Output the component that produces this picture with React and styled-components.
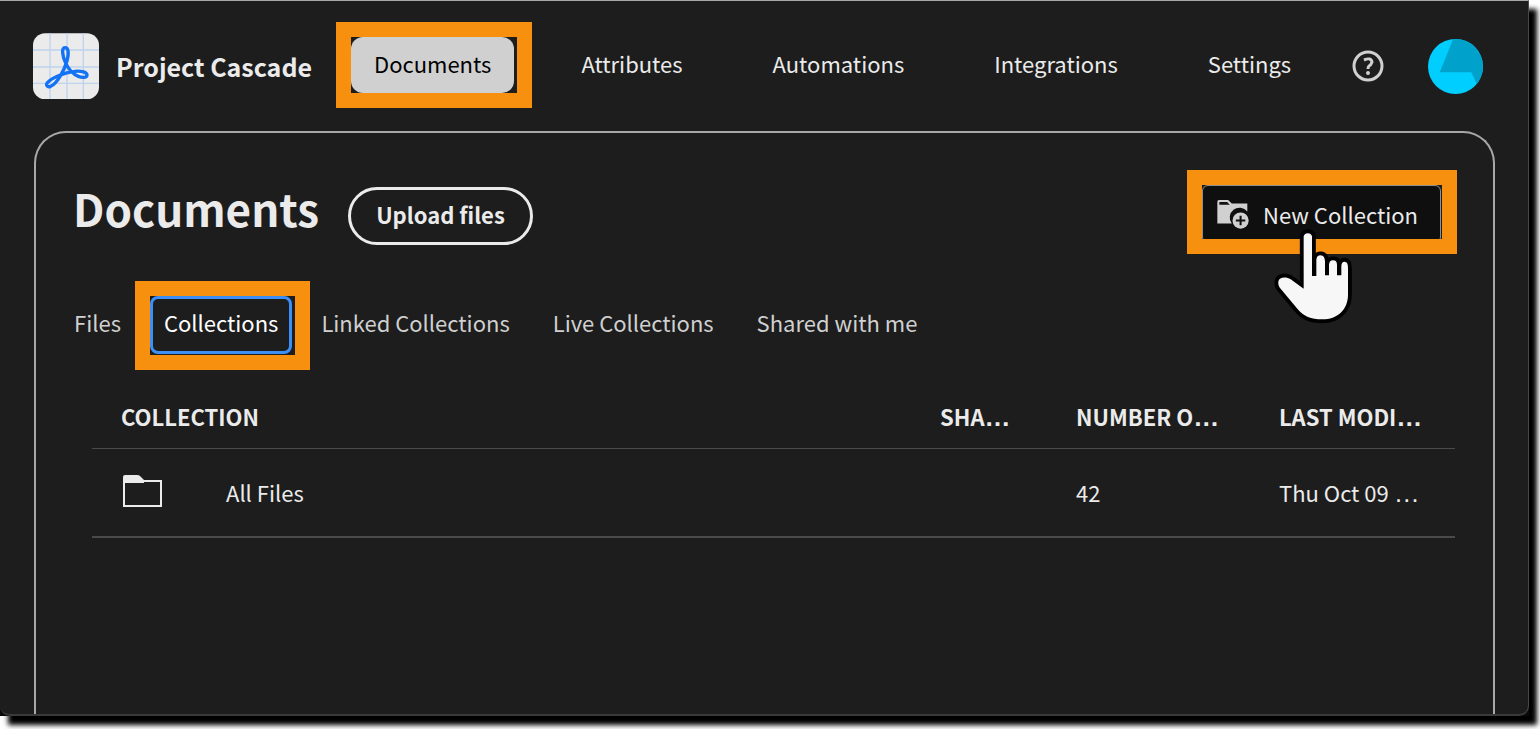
import React from "react";
import styled, { createGlobalStyle } from "styled-components";

const GlobalStyle = createGlobalStyle`
  *, *::before, *::after { box-sizing: border-box; }
  body {
    margin: 0;
    background: #fff;
    color: #ebebeb;
    font-family: "Noto Sans CJK JP", "Noto Sans", sans-serif;
    font-size: 22px;
    line-height: 32px;
  }
  button { font: inherit; color: inherit; cursor: pointer; }
  a { color: inherit; text-decoration: none; }
`;

const Page = styled.div`
  display: flex;
  min-height: 100vh;
  padding: 0 11px 13px 0;
  overflow: hidden;
`;

const Backdrop = styled.div`
  display: flex;
  flex: 1;
  min-width: 0;
  background: #0a0a0a;
  box-shadow: 8px 9px 5px #000;
`;

const AppWindow = styled.div`
  display: flex;
  flex: 1;
  flex-direction: column;
  min-width: 0;
  background: #1d1d1d;
  border-top: 1px solid #a5aaa8;
  border-right: 1px solid #484848;
  border-bottom: 2px solid #3a3a3a;
  border-radius: 0 0 10px 10px;
`;

const Header = styled.header`
  display: flex;
  align-items: center;
  height: 130px;
  padding: 0 45px 0 33px;
`;

const Brand = styled.div`
  display: flex;
  align-items: center;
  gap: 17px;
  font-size: 25px;
  font-weight: 700;
  white-space: nowrap;
`;

const Nav = styled.nav`
  display: flex;
  gap: 44px;
  margin: 0 0 2px 39px;
`;

const NavLink = styled.a`
  position: relative;
  display: flex;
  align-items: center;
  height: 56px;
  padding: 0 23px 4px;
  border-radius: 12px;
  background: ${(p) => (p.$active ? "#d0d0d0" : "transparent")};
  color: ${(p) => (p.$active ? "#000" : "#ebebeb")};
`;

const Highlight = styled.span`
  position: absolute;
  inset: ${(p) => p.$inset};
  border: 15px solid #f78f0f;
  pointer-events: none;
`;

const Tools = styled.div`
  display: flex;
  align-items: center;
  gap: 44px;
  margin-left: auto;
`;

const IconButton = styled.button`
  display: flex;
  padding: 0;
  border: 0;
  background: none;
`;

const Panel = styled.main`
  flex: 1;
  margin: 0 33px 0 34px;
  padding: 52px 36px 0 24px;
  border: 2px solid #a8a8a8;
  border-bottom: 0;
  border-radius: 32px 32px 0 0;
`;

const TitleRow = styled.div`
  display: flex;
  align-items: center;
  height: 62px;
  padding: 0 16px 0 13px;
`;

const Title = styled.h1`
  align-self: flex-start;
  margin: 0 29px 0 0;
  font-size: 44px;
  line-height: 46px;
  font-weight: 700;
`;

const UploadButton = styled.button`
  height: 58px;
  padding: 0 25px 4px;
  border: 3px solid #ebebeb;
  border-radius: 29px;
  background: none;
  font-weight: 700;
`;

const NewButton = styled.button`
  position: relative;
  display: flex;
  align-items: center;
  align-self: flex-start;
  gap: 14px;
  height: 58px;
  margin-left: auto;
  padding: 0 22px 0 14px;
  border: 1px solid #8f8f8f;
  border-radius: 6px;
  background: #0f0f0f;
`;

const Pointer = styled.svg`
  position: absolute;
  top: 41px;
  left: 70px;
`;

const Tabs = styled.div`
  display: flex;
  gap: 15px;
  margin-top: 49px;
`;

const Tab = styled.button`
  position: relative;
  height: 58px;
  padding: 0 11px 6px;
  border: 3px solid ${(p) => (p.$active ? "#3d8ff5" : "transparent")};
  border-radius: 8px;
  background: none;
  color: ${(p) => (p.$active ? "#fff" : "#d0d0d0")};
`;

const Table = styled.table`
  width: calc(100% - 34px);
  margin: 31px 2px 0 32px;
  border-collapse: collapse;
  table-layout: fixed;
  text-align: left;
`;

const Th = styled.th`
  width: ${(p) => p.$width};
  height: 63px;
  padding: ${(p) => (p.$lead ? "0 0 0 29px" : "0 0 0 14px")};
  border-bottom: 1px solid #4a4a4a;
  font-weight: 700;
  white-space: nowrap;
`;

const Td = styled.td`
  height: 89px;
  padding: ${(p) => (p.$lead ? "0 0 0 31px" : "0 0 0 14px")};
  border-bottom: 2px solid #4a4a4a;
  white-space: nowrap;
`;

const FileCell = styled.div`
  display: flex;
  align-items: center;
  gap: 63px;
`;

const Dots = styled.span`
  font-family: "Liberation Sans", sans-serif;
  font-size: 26px;
`;

const AppLogo = () => (
  <svg width="66" height="66" viewBox="99 100 198 198" aria-hidden="true">
    <rect x="99" y="101" width="198" height="198" rx="36" fill="#ebebeb" />
    <path d="M150 101V299M201 101V299M250 101V299M99 151H297M99 202H297M99 251H297" stroke="#bed3ee" strokeWidth="4" />
    <path
      d="M195 144C206 144 207 160 201 184C192 215 170 252 152 260C142 264 136 256 143 248C155 235 190 219 225 215C245 213 261 218 261 226C261 234 248 235 235 230C215 222 205 208 196 188C188 170 183 144 195 144Z"
      fill="none"
      stroke="#1473f5"
      strokeWidth="10"
    />
  </svg>
);

const HelpIcon = () => (
  <svg width="32" height="32" viewBox="0 0 32 32" fill="none" stroke="#d0d0d0" aria-hidden="true">
    <circle cx="16" cy="16" r="14" strokeWidth="3" />
    <path d="M12 10Q19 7 20 12Q19 15 17 16Q16 17 16 19" strokeWidth="3" />
    <circle cx="16" cy="23" r="2" fill="#d0d0d0" stroke="none" />
  </svg>
);

const Avatar = () => (
  <svg width="55" height="55" viewBox="747 117 164 164" aria-hidden="true">
    <clipPath id="avatar"><circle cx="829" cy="199" r="82" /></clipPath>
    <g clipPath="url(#avatar)">
      <rect x="747" y="117" width="164" height="164" fill="#00ceff" />
      <path d="M824 112L782 216H876L894 254L920 240V112Z" fill="#00a2cb" />
    </g>
  </svg>
);

const NewFolderIcon = () => (
  <svg width="32" height="30" viewBox="111 603 95 89" aria-hidden="true">
    <path d="M112 676V611Q112 606 117 606H144L155 616H201V640A28 28 0 0 0 155 676Z" fill="#d0d0d0" />
    <path d="M118 612H141L149 620H118Z" fill="#0f0f0f" />
    <circle cx="181" cy="667" r="24" fill="#d0d0d0" />
    <path d="M181 653V681M167 667H195" stroke="#0f0f0f" strokeWidth="6" />
  </svg>
);

const FolderIcon = () => (
  <svg width="40" height="34" viewBox="0 0 40 34" aria-hidden="true">
    <path d="M1 7V31H38V6H4" fill="none" stroke="#ebebeb" strokeWidth="2" />
    <path d="M0 8V2Q0 0 2 0H14Q16 0 17 1L21 5V8Z" fill="#ebebeb" />
  </svg>
);

const HandPointer = () => (
  <Pointer width="80" height="97" viewBox="282 677 240 291" aria-hidden="true">
    <path
      d="M374 862V705A13 13 0 0 1 399 705V824H412V775Q413 762 425 762Q437 762 438 780V822H450V790Q451 777 462 777Q474 777 474 790V822H487V793Q488 781 497 781Q507 781 507 800V880C507 925 475 954 430 954C395 954 375 945 355 922L303 860C296 850 296 838 303 832C312 827 325 828 335 834Z"
      fill="#f7f7f7"
      stroke="#000"
      strokeWidth="23"
      strokeLinejoin="round"
      paintOrder="stroke"
    />
  </Pointer>
);

const sections = ["Documents", "Attributes", "Automations", "Integrations", "Settings"];
const tabs = ["Files", "Collections", "Linked Collections", "Live Collections", "Shared with me"];

export default function App() {
  return (
    <>
      <GlobalStyle />
      <Page>
        <Backdrop>
          <AppWindow>
            <Header>
              <Brand>
                <AppLogo />
                Project Cascade
              </Brand>
              <Nav>
                {sections.map((name, i) => (
                  <NavLink key={name} href="#" $active={i === 0}>
                    {name}
                    {i === 0 && <Highlight $inset="-15px -18px -15px -15px" />}
                  </NavLink>
                ))}
              </Nav>
              <Tools>
                <IconButton aria-label="Help"><HelpIcon /></IconButton>
                <IconButton aria-label="Account"><Avatar /></IconButton>
              </Tools>
            </Header>
            <Panel>
              <TitleRow>
                <Title>Documents</Title>
                <UploadButton>Upload files</UploadButton>
                <NewButton>
                  <NewFolderIcon />
                  New Collection
                  <Highlight $inset="-16px -17px -12px -16px" />
                  <HandPointer />
                </NewButton>
              </TitleRow>
              <Tabs role="tablist">
                {tabs.map((name, i) => (
                  <Tab key={name} role="tab" aria-selected={i === 1} $active={i === 1}>
                    {name}
                    {i === 1 && <Highlight $inset="-18px -21px -19px -18px" />}
                  </Tab>
                ))}
              </Tabs>
              <Table>
                <thead>
                  <tr>
                    <Th $lead>COLLECTION</Th>
                    <Th $width="136px">SHA<Dots>…</Dots></Th>
                    <Th $width="203px">NUMBER O<Dots>…</Dots></Th>
                    <Th $width="190px">LAST MODI<Dots>…</Dots></Th>
                  </tr>
                </thead>
                <tbody>
                  <tr>
                    <Td $lead>
                      <FileCell>
                        <FolderIcon />
                        All Files
                      </FileCell>
                    </Td>
                    <Td />
                    <Td>42</Td>
                    <Td>Thu Oct 09 <Dots>…</Dots></Td>
                  </tr>
                </tbody>
              </Table>
            </Panel>
          </AppWindow>
        </Backdrop>
      </Page>
    </>
  );
}
